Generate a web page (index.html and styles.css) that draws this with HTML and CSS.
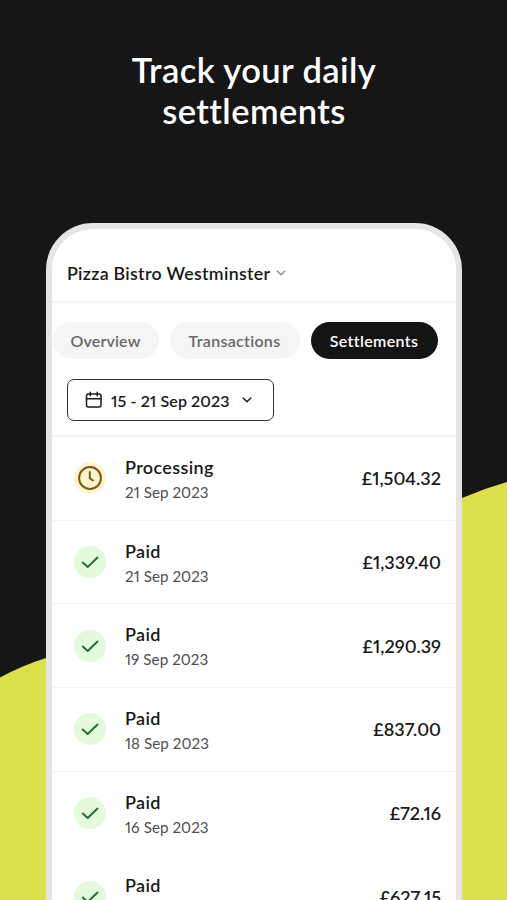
FILE: index.html
```html
<!DOCTYPE html>
<html lang="en">
<head>
<meta charset="utf-8">
<title>Settlements</title>
<link rel="stylesheet" href="styles.css">
</head>
<body>
<svg class="wave" viewBox="0 0 507 900" aria-hidden="true"><path d="M0 677.500Q22 665.500 46 658L462 498Q484 488.500 507 482V900H0Z"/></svg>
<svg class="symbols" aria-hidden="true">
  <symbol id="check" viewBox="0 0 32 32"><path d="M8.800 16.500L13.700 20.900L23.500 11.600"/></symbol>
  <symbol id="chevron" viewBox="0 0 10 8"><path d="M1.200 2L5 5.700L8.800 2"/></symbol>
</svg>
<main class="page">
  <h1 class="headline">Track your daily<br>settlements</h1>
  <section class="phone">
    <header class="venue"><span class="venue-name">Pizza Bistro Westminster</span><svg class="chevron"><use href="#chevron"/></svg></header>
    <nav class="tabs">
      <span class="tab overview">Overview</span>
      <span class="tab transactions">Transactions</span>
      <span class="tab active">Settlements</span>
    </nav>
    <div class="filter">
      <div class="range">
        <svg class="calendar" viewBox="0 0 18 18"><rect x="1.500" y="3" width="14.500" height="13" rx="2"/><path d="M1.500 7.800H16M5.300 1.200V4.800M12.200 1.200V4.800"/></svg>
        <span class="range-text">15 - 21 Sep 2023</span>
        <svg class="chevron dark"><use href="#chevron"/></svg>
      </div>
    </div>
    <ul class="list">
      <li class="row"><svg class="status pending" viewBox="0 0 32 32"><circle cx="16" cy="16" r="10.900"/><path d="M15.800 10V16.200L19 18.500"/></svg><div class="info"><b class="state">Processing</b><span class="date">21 Sep 2023</span></div><span class="amount">£1,504.32</span></li>
      <li class="row"><svg class="status"><use href="#check"/></svg><div class="info"><b class="state">Paid</b><span class="date">21 Sep 2023</span></div><span class="amount">£1,339.40</span></li>
      <li class="row"><svg class="status"><use href="#check"/></svg><div class="info"><b class="state">Paid</b><span class="date">19 Sep 2023</span></div><span class="amount">£1,290.39</span></li>
      <li class="row"><svg class="status"><use href="#check"/></svg><div class="info"><b class="state">Paid</b><span class="date">18 Sep 2023</span></div><span class="amount">£837.00</span></li>
      <li class="row last"><svg class="status"><use href="#check"/></svg><div class="info"><b class="state">Paid</b><span class="date">16 Sep 2023</span></div><span class="amount">£72.16</span></li>
      <li class="row last"><svg class="status"><use href="#check"/></svg><div class="info"><b class="state">Paid</b></div><span class="amount amount-wide">£627.15</span></li>
    </ul>
  </section>
</main>
</body>
</html>
```

FILE: styles.css
```css
* { box-sizing: border-box; }
body { margin: 0; height: 900px; overflow: hidden; background: #161616; color: #191919; font-family: Lato, "Liberation Sans", sans-serif; font-weight: 600; font-variant-ligatures: none; font-variant-numeric: proportional-nums; }
svg { fill: none; stroke: currentColor; stroke-linecap: round; stroke-linejoin: round; flex: none; }
.symbols { position: absolute; width: 0; height: 0; }
.wave { position: absolute; top: 0; left: 0; width: 507px; height: 900px; fill: #dbe148; stroke: none; }
.page { position: relative; height: 900px; overflow: hidden; display: flex; flex-direction: column; align-items: center; }
.headline { margin: 0; padding: 50px 0 0 1px; height: 223px; flex: none; color: #fff; font-size: 34.500px; line-height: 40.500px; font-weight: 600; text-align: center; letter-spacing: .42px; }
.phone { width: 416px; height: 760px; flex: none; margin-left: 1px; border: 6px solid #e5e5e6; border-radius: 47px 47px 0 0; background: #fff; overflow: hidden; }
.venue { height: 74px; padding: 16px 15px 0; border-bottom: 2px solid #f5f5f5; display: flex; align-items: center; gap: 6px; font-size: 17.800px; letter-spacing: .3px; }
.chevron { width: 10px; height: 8px; color: #8b8b8b; stroke-width: 1.400; }
.dark { color: #222; stroke-width: 1.600; }
.tabs { padding: 19px 0 0 1px; display: flex; gap: 11px; }
.tab { height: 37px; border-radius: 19px; background: #f5f5f5; color: #686868; display: flex; align-items: center; justify-content: center; padding-right: 1px; font-size: 16px; letter-spacing: .15px; width: 106px; }
.transactions { width: 130px; letter-spacing: .3px; }
.active { width: 127px; background: #141414; color: #fff; letter-spacing: .35px; }
.filter { height: 78px; padding: 20px 15px 0; border-bottom: 2px solid #f5f5f5; }
.range { width: 207px; height: 42px; border: 1.500px solid #333; border-radius: 7px; display: flex; align-items: center; padding-left: 17px; font-size: 16px; letter-spacing: .1px; }
.calendar { width: 18px; height: 18px; stroke-width: 1.500; margin-right: 8px; }
.range-text { width: 119px; margin-right: 12px; white-space: nowrap; }
.list { margin: 0; padding: 0; list-style: none; }
.row { height: 83.700px; padding: 0 15px 0 22px; border-bottom: 1px solid #f4f4f5; display: flex; align-items: center; }
.last { border-color: transparent; }
.status { width: 32px; height: 32px; border-radius: 50%; background: #e4fadc; color: #286b38; stroke-width: 2; }
.pending { background: #fff4cc; color: #775a17; }
.info { margin-left: 19px; padding-top: 2px; height: 51px; flex: 1; display: flex; flex-direction: column; }
.state { font-size: 18px; line-height: 25px; font-weight: 600; letter-spacing: .35px; }
.date { font-size: 15.200px; line-height: 24px; font-weight: 400; color: #505050; letter-spacing: .05px; }
.amount { font-size: 18px; }
.amount-wide { font-kerning: none; letter-spacing: -.1px; }
```
